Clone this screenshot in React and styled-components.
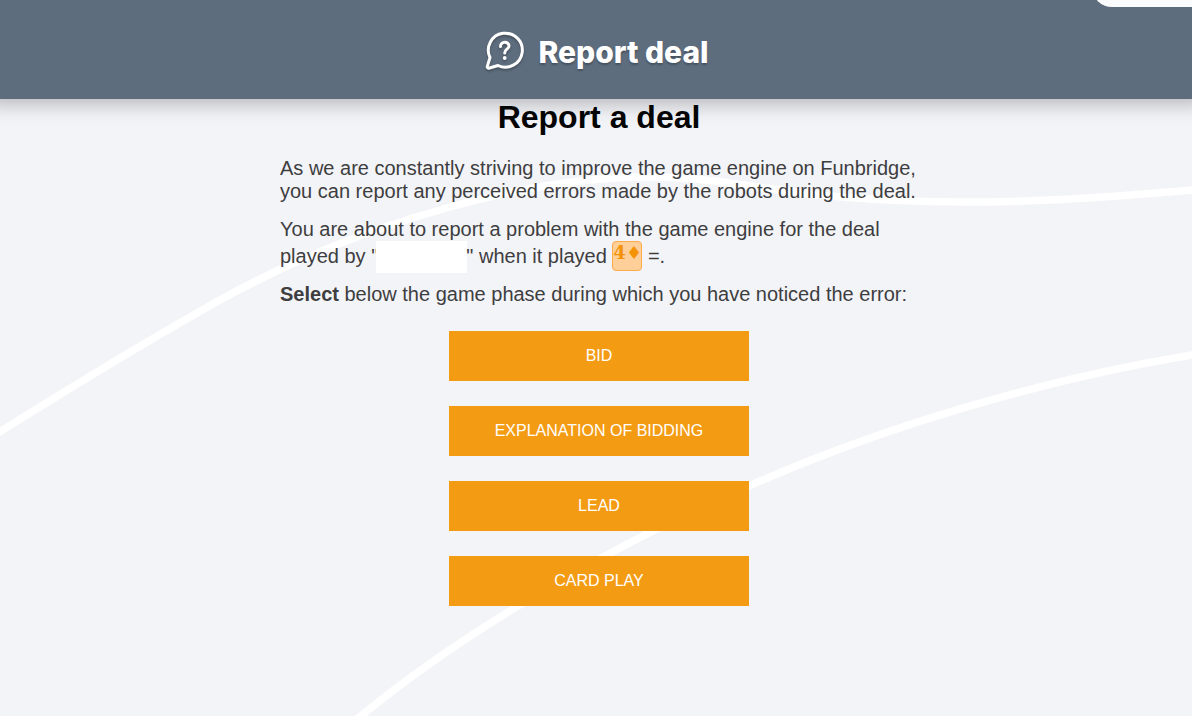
import React from "react";
import styled, { createGlobalStyle } from "styled-components";

const GlobalStyle = createGlobalStyle`
  *, *::before, *::after { box-sizing: border-box; }
  body {
    margin: 0;
    background: #f3f4f8;
    color: #3e3e3f;
    font-family: "Liberation Sans", Arial, sans-serif;
    font-size: 20px;
    line-height: 23px;
  }
`;

const Page = styled.div`
  position: relative;
  min-height: 100vh;
  overflow: hidden;
  isolation: isolate;
`;

const Backdrop = styled.svg`
  position: absolute;
  inset: 0;
  z-index: -1;
  width: 100%;
  height: 100%;
`;

const Header = styled.header`
  display: flex;
  align-items: center;
  justify-content: center;
  gap: 13px;
  height: 99px;
  padding-left: 2px;
  background: #5e6d7e;
  box-shadow: 0 -12px 20px 16px rgba(0, 0, 0, 0.28);
`;

const HeaderIcon = styled.svg`
  width: 40px;
  height: 40px;
  filter: drop-shadow(0 2px 1px rgba(0, 0, 0, 0.25));
`;

const HeaderTitle = styled.span`
  padding-top: 4px;
  color: #fff;
  font-family: Inter, "Open Sans", sans-serif;
  font-size: 30px;
  font-weight: 800;
  line-height: 40px;
  text-shadow: 0 2px 2px rgba(0, 0, 0, 0.25);
`;

const CornerTab = styled.div`
  position: absolute;
  top: -13px;
  right: 0;
  width: 100px;
  height: 20px;
  background: #fafbfd;
  border-bottom-left-radius: 20px;
`;

const Main = styled.main`
  display: flex;
  flex-direction: column;
  gap: 15px;
  width: 100%;
  max-width: 646px;
  margin: 0 auto;
  padding: 0 1px 0 7px;
`;

const Heading = styled.h1`
  margin: 0 0 6px;
  color: #050505;
  font-size: 32px;
  font-weight: 700;
  line-height: 37px;
  text-align: center;
`;

const Paragraph = styled.p`
  margin: 0;
`;

const PlayerName = styled.span`
  display: inline-block;
  width: 91px;
  height: 32px;
  margin: 0 -1px -5px -2px;
  background: #fff;
  vertical-align: -5px;
`;

const BidBadge = styled.span`
  display: inline-block;
  width: 30px;
  height: 30px;
  margin-bottom: -3px;
  border: 1px solid #fbac48;
  border-radius: 4px;
  background: #ffcf99;
  color: #f49208;
  font-family: "DejaVu Serif", serif;
  font-size: 18px;
  font-weight: 700;
  line-height: 22px;
  white-space: nowrap;
  vertical-align: -5px;
  overflow: hidden;
`;

const Choices = styled.div`
  display: flex;
  flex-direction: column;
  align-items: center;
  gap: 25px;
  padding: 10px 0 40px;
`;

const ChoiceButton = styled.button`
  width: 300px;
  max-width: 100%;
  height: 50px;
  border: 0;
  background: #f49b14;
  color: #fff;
  font-family: inherit;
  font-size: 16px;
  text-transform: uppercase;
  cursor: pointer;
`;

const phases = ["Bid", "Explanation of bidding", "Lead", "Card play"];

export default function App() {
  return (
    <>
      <GlobalStyle />
      <Page>
        <Backdrop
          viewBox="0 0 1192 716"
          preserveAspectRatio="xMidYMid slice"
          fill="none"
          stroke="#fff"
          strokeWidth="7.5"
          aria-hidden="true"
        >
          <path d="M-10 438 L0 431.7 C73 386 147 341 220 300 C290 261 370 229 450 207 C515 189 580 177 650 177 C740 177 790 202 965 202 C1040 202 1115 197 1192 190 L1202 189" />
          <path d="M351 724 L361 716 C470 626 629 537 749 486 C880 428 1040 380 1192 355 L1202 353" />
        </Backdrop>
        <Header>
          <HeaderIcon
            viewBox="0 0 40 40"
            fill="none"
            stroke="#fff"
            strokeWidth="3"
            strokeLinecap="round"
            strokeLinejoin="round"
            aria-hidden="true"
          >
            <path d="M5 27.5 A17 17 0 1 1 13 35.5 L4.5 38 C3 38.4 2 37.8 2.3 36.4 Z" />
            <path d="M15.5 16.6 C15.5 11 24 11 24 16 C24 19.2 19.7 19.2 19.7 23" />
            <circle cx="19.7" cy="28" r="1.9" fill="#fff" stroke="none" />
          </HeaderIcon>
          <HeaderTitle>Report deal</HeaderTitle>
        </Header>
        <CornerTab />
        <Main>
          <Heading>Report a deal</Heading>
          <Paragraph>
            As we are constantly striving to improve the game engine on Funbridge,
            you can report any perceived errors made by the robots during the deal.
          </Paragraph>
          <Paragraph>
            You are about to report a problem with the game engine for the deal
            played by "<PlayerName />" when it played <BidBadge>4♦</BidBadge> =.
          </Paragraph>
          <Paragraph>
            <strong>Select</strong> below the game phase during which you have
            noticed the error:
          </Paragraph>
          <Choices>
            {phases.map((phase) => (
              <ChoiceButton key={phase} type="button">
                {phase}
              </ChoiceButton>
            ))}
          </Choices>
        </Main>
      </Page>
    </>
  );
}
